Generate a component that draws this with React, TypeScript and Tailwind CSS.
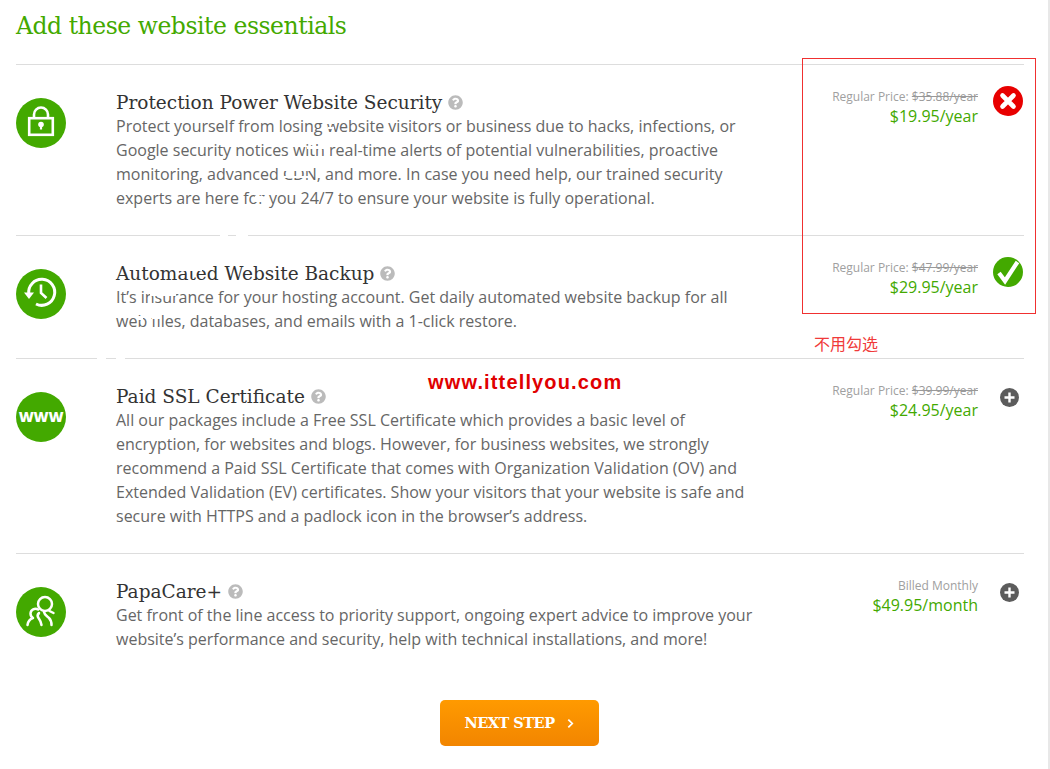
import React from "react";
import { FaQuestionCircle } from "react-icons/fa";

const sans = "font-['Open_Sans',sans-serif]";
const slab = "font-['DejaVu_Serif',serif]";

function Lock() {
  return (
    <svg viewBox="0 0 50 50" className="w-[50px] h-[50px]">
      <circle cx="25" cy="25" r="25" fill="#43a900" />
      <path d="M18 20v-3.5a7 7 0 0 1 14 0V20" fill="none" stroke="#fff" strokeWidth="2.6" />
      <rect x="13.2" y="20.2" width="23.6" height="16.6" fill="#43a900" stroke="#fff" strokeWidth="2.6" />
      <circle cx="25" cy="26.5" r="2.8" fill="#fff" />
      <rect x="23.9" y="26.5" width="2.2" height="5" fill="#fff" />
    </svg>
  );
}

function Clock() {
  return (
    <svg viewBox="0 0 50 50" className="w-[50px] h-[50px]">
      <circle cx="25" cy="25" r="25" fill="#43a900" />
      <path d="M12.8 25A13 13 0 1 1 20 35" fill="none" stroke="#fff" strokeWidth="3" />
      <path d="M8 23.5h10l-5 6.5z" fill="#fff" />
      <path d="M25 15.5v8.5l5.5 5" fill="none" stroke="#fff" strokeWidth="2.6" />
    </svg>
  );
}

function Www() {
  return (
    <div className="w-[50px] h-[50px] rounded-full bg-[#43a900] flex items-center justify-center text-white">
      <span className={`${sans} font-extrabold text-[14.5px] leading-none tracking-[-0.3px]`}>WWW</span>
    </div>
  );
}

function People() {
  return (
    <svg viewBox="0 0 50 50" className="w-[50px] h-[50px]">
      <circle cx="25" cy="25" r="25" fill="#43a900" />
      <g fill="none" stroke="#fff" strokeWidth="2.5" strokeLinecap="round" strokeLinejoin="round">
        <circle cx="29" cy="17" r="7" />
        <path d="M22 22.5a5 5 0 0 0-7.5 4c0 2 1 3.5 2.5 4.5-3 1-5 3.5-5.5 7" />
        <path d="M23 26c-1.5 1.5-2 3-.5 5 1 1.5 2.5 3 3 7" />
        <path d="M33.5 24l4 2" />
        <path d="M28 25c.5 3 3 4 5 6s2.5 4 2.5 7" />
      </g>
    </svg>
  );
}

function Cross() {
  return (
    <svg viewBox="0 0 30 30" className="w-[30px] h-[30px]">
      <circle cx="15" cy="15" r="15" fill="#e80000" />
      <path d="M9.5 9.5l11 11M20.5 9.5l-11 11" stroke="#fff" strokeWidth="4.6" strokeLinecap="round" />
    </svg>
  );
}

function Check() {
  return (
    <svg viewBox="0 0 30 30" className="w-[30px] h-[30px]">
      <circle cx="15" cy="15" r="15" fill="#43a900" />
      <path d="M6 16l6 8L24.5 5" fill="none" stroke="#fff" strokeWidth="4.2" />
    </svg>
  );
}

function Plus() {
  return (
    <svg viewBox="0 0 19 19" className="w-[19px] h-[19px]">
      <circle cx="9.5" cy="9.5" r="9.5" fill="#5c5c5c" />
      <path d="M4.5 9.5h10M9.5 4.5v10" stroke="#fff" strokeWidth="2.4" />
    </svg>
  );
}

function Row({ icon, title, desc, note, old, price, action, actionClass }: any) {
  return (
    <div className="flex py-[25px] border-t border-[#dddddd]">
      <div className="w-[100px] shrink-0 mt-2">{icon}</div>
      <div className="w-[640px] shrink-0">
        <div className="flex items-center h-6 gap-[6px]">
          <h3 className={`${slab} text-[#333333] text-[18.5px] leading-6 font-normal pt-[1px]`}>{title}</h3>
          <FaQuestionCircle className="text-[#bbbbbb] text-[15px]" />
        </div>
        <p className={`${sans} text-[16px] leading-6 text-[#666666] whitespace-pre-line`}>{desc}</p>
      </div>
      <div className={`${sans} flex-1 text-right -mt-[3px]`}>
        <div className="text-[12px] leading-[19px] text-[#a0a0a0]">
          {note}
          {old && " "}
          {old && <span className="line-through text-[#999999]">{old}</span>}
        </div>
        <div className="text-[16px] leading-[20px] text-[#43a900]">{price}</div>
      </div>
      <div className={`w-[46px] shrink-0 flex justify-end ${actionClass}`}>{action}</div>
    </div>
  );
}

export default function App() {
  return (
    <div className="relative w-[1050px] h-[769px] overflow-hidden bg-white border-r-2 border-[#e8e8e8]">
      <div className="pl-4 w-[1024px]">
        <h2 className={`${slab} text-[#43a900] text-[23.5px] leading-[30px] font-normal pt-[11px] pb-[23px] tracking-[-0.47px]`}>
          Add these website essentials
        </h2>
        <Row
          icon={<Lock />}
          title="Protection Power Website Security"
          desc={"Protect yourself from losing website visitors or business due to hacks, infections, or\nGoogle security notices with real-time alerts of potential vulnerabilities, proactive\nmonitoring, advanced CDN, and more. In case you need help, our trained security\nexperts are here for you 24/7 to ensure your website is fully operational."}
          note="Regular Price:"
          old="$35.88/year"
          price="$19.95/year"
          action={<Cross />}
          actionClass="-mt-1 pr-[1px]"
        />
        <Row
          icon={<Clock />}
          title="Automated Website Backup"
          desc={"It’s insurance for your hosting account. Get daily automated website backup for all\nweb files, databases, and emails with a 1-click restore."}
          note="Regular Price:"
          old="$47.99/year"
          price="$29.95/year"
          action={<Check />}
          actionClass="-mt-1 pr-[1px]"
        />
        <Row
          icon={<Www />}
          title="Paid SSL Certificate"
          desc={"All our packages include a Free SSL Certificate which provides a basic level of\nencryption, for websites and blogs. However, for business websites, we strongly\nrecommend a Paid SSL Certificate that comes with Organization Validation (OV) and\nExtended Validation (EV) certificates. Show your visitors that your website is safe and\nsecure with HTTPS and a padlock icon in the browser’s address."}
          note="Regular Price:"
          old="$39.99/year"
          price="$24.95/year"
          action={<Plus />}
          actionClass="mt-[4px] pr-[5px]"
        />
        <Row
          icon={<People />}
          title="PapaCare+"
          desc={"Get front of the line access to priority support, ongoing expert advice to improve your\nwebsite’s performance and security, help with technical installations, and more!"}
          note="Billed Monthly"
          price="$49.95/month"
          action={<Plus />}
          actionClass="mt-[4px] pr-[5px]"
        />
        <div className="flex justify-center pt-[24px] pr-[2px]">
          <button className={`${slab} w-[159px] h-[46px] rounded-[5px] bg-gradient-to-b from-[#ff9a00] to-[#f28500] text-white font-bold text-[14.5px] tracking-[-0.5px] flex items-center justify-center gap-[12px]`}>
            NEXT STEP
            <svg viewBox="0 0 8 12" className="w-[7px] h-[11px]"><path d="M1.5 1.5L6 6l-4.5 4.5" fill="none" stroke="#fff" strokeWidth="2" /></svg>
          </button>
        </div>
      </div>
      {/* white specks of the ghost watermark, drawn over the text */}
      <svg viewBox="0 0 1050 769" className="absolute inset-0 w-[1050px] h-[769px] pointer-events-none" fill="#fff">
        <rect x="326" y="121" width="8" height="3" />
        <rect x="328" y="127" width="6" height="2" />
        <rect x="307" y="146" width="22" height="3" />
        <rect x="324" y="149" width="6" height="5" />
        <rect x="284" y="168" width="28" height="3" />
        <rect x="284" y="176" width="26" height="2" />
        <rect x="255" y="196" width="8" height="6" />
        <rect x="220" y="235" width="8" height="1" />
        <rect x="236" y="235" width="12" height="1" />
        <rect x="176" y="266" width="26" height="5" />
        <rect x="150" y="292" width="26" height="4" />
        <rect x="137" y="316" width="6" height="4" />
        <rect x="152" y="315" width="8" height="4" />
        <rect x="97" y="358" width="9" height="1" />
        <rect x="116" y="358" width="9" height="1" />
      </svg>
      {/* annotations over the screenshot */}
      <div className="absolute left-[802px] top-[58px] w-[234px] h-[256px] border border-[#f03030]" />
      <div className="absolute left-[814px] top-[333px] text-[16px] leading-[20px] text-[#f03a3a] font-['Noto_Sans_CJK_SC',sans-serif]">不用勾选</div>
      <div className="absolute left-[428px] top-[371px] text-[20px] leading-[23px] font-bold text-[#e00000] font-['Liberation_Sans',sans-serif] tracking-[1.15px]">www.ittellyou.com</div>
    </div>
  );
}
